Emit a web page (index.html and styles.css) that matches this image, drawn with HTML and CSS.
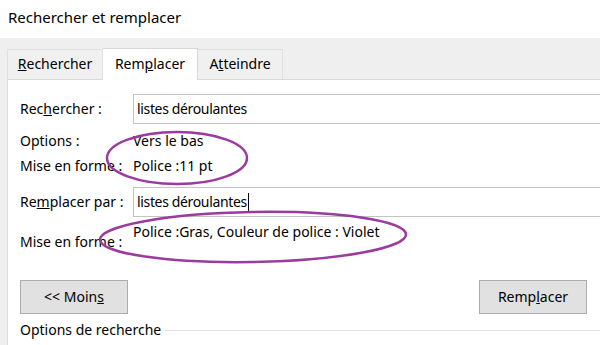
FILE: index.html
```html
<!DOCTYPE html>
<html lang="fr">
    <head>
        <meta charset="utf-8">
        <title>Rechercher et remplacer</title>
        <link rel="stylesheet" href="styles.css">
    </head>
    <body>
        <div class="page">
            <div class="title">Rechercher et remplacer</div>
            <div class="dialog">
                <div class="tabs">
                    <div class="tab t1"><u>R</u>echercher</div>
                    <div class="tab t2 active">Rem<u>p</u>lacer</div>
                    <div class="tab t3">A<u>t</u>teindre</div>
                </div>
                <div class="panel">
                    <div class="row r-find">
                        <div class="label">Rec<u>h</u>ercher :</div>
                        <div class="field">listes déroulantes</div>
                    </div>
                    <div class="row r-opt">
                        <div class="label">Options :</div>
                        <div class="value">Vers le bas</div>
                    </div>
                    <div class="row r-fmt">
                        <div class="label">Mise en forme :</div>
                        <div class="value">Police :11 pt</div>
                    </div>
                    <div class="row r-repl">
                        <div class="label">Re<u>m</u>placer par :</div>
                        <div class="field">listes déroulantes<span class="caret"></span></div>
                    </div>
                    <div class="row r-fmt2">
                        <div class="label">Mise en forme :</div>
                        <div class="value">Police :Gras, Couleur de police : Violet</div>
                    </div>
                    <div class="buttons">
                        <div class="btn">&lt;&lt; Moin<u>s</u></div>
                        <div class="btn">Remp<u>l</u>acer</div>
                    </div>
                    <div class="section">
                        <span>Options de recherche</span>
                        <span class="rule"></span>
                    </div>
                </div>
            </div>
            <svg class="marks" width="600" height="345" viewBox="0 0 600 345">
                <ellipse cx="177" cy="158" rx="70" ry="26" />
                <ellipse cx="253" cy="237" rx="153" ry="25" transform="rotate(-1 253 237)" />
            </svg>
        </div>
    </body>
</html>
```

FILE: styles.css
```css
html, body {
    margin: 0;
    padding: 0;
    background: #ffffff;
}
body {
    font-family: "Noto Sans", "Open Sans", sans-serif;
    font-size: 14px;
    color: #000000;
    overflow: hidden;
}
.page {
    position: relative;
    width: 600px;
    height: 345px;
    overflow: hidden;
}
.title {
    height: 38px;
    box-sizing: border-box;
    padding: 5px 0 0 8px;
    font-size: 15px;
    line-height: 24px;
}
.dialog {
    background: #efefef;
    padding: 11px 0 0 7px;
    height: 307px;
    box-sizing: border-box;
}
.tabs {
    display: flex;
    align-items: flex-end;
    height: 30px;
}
.tab {
    box-sizing: border-box;
    height: 30px;
    border: 1px solid #e0e0e0;
    border-bottom: none;
    line-height: 28px;
    text-align: center;
    background: #f0f0f0;
}
.tab.t1 {
    width: 96px;
}
.tab.t2 {
    width: 95px;
}
.tab.t3 {
    width: 85px;
    border-left: none;
}
.tab.active {
    height: 32px;
    margin-bottom: -1px;
    background: #ffffff;
    border-color: #d9d9d9;
    border-left: none;
    line-height: 30px;
    position: relative;
}
.panel {
    background: #ffffff;
    border-top: 1px solid #d9d9d9;
    border-left: 1px solid #dcdcdc;
    padding: 0 0 0 12px;
    height: 266px;
}
.row {
    display: flex;
    line-height: 20px;
}
.label {
    width: 113px;
    flex: none;
}
.field {
    flex: 1;
    height: 30px;
    box-sizing: border-box;
    border: 1px solid #c4c4c4;
    border-right: none;
    padding: 4px 0 0 3px;
    line-height: 20px;
    letter-spacing: -0.35px;
    margin-right: -10px;
}
.caret {
    display: inline-block;
    width: 1px;
    height: 18px;
    margin-left: 1px;
    background: #000000;
    vertical-align: -4px;
}
.r-find {
    margin-top: 14px;
    align-items: center;
}
.r-opt {
    margin-top: 7px;
}
.r-fmt {
    margin-top: 5px;
}
.r-repl {
    margin-top: 11px;
    align-items: center;
}
.r-fmt2 {
    margin-top: 5px;
}
.r-fmt2 .label {
    padding-top: 10px;
}
.buttons {
    display: flex;
    justify-content: space-between;
    margin-top: 28px;
    padding-right: 13px;
}
.btn {
    width: 108px;
    height: 34px;
    box-sizing: border-box;
    background: #e1e1e1;
    border: 1px solid #adadad;
    text-align: center;
    line-height: 32px;
}
.section {
    display: flex;
    align-items: center;
    margin-top: 6px;
    line-height: 20px;
}
.section .rule {
    flex: 1;
    height: 1px;
    background: #e3e3e3;
    margin-left: 4px;
    margin-top: 1px;
}
.marks {
    position: absolute;
    left: 0;
    top: 0;
}
.marks ellipse {
    fill: none;
    stroke: #9b3a9f;
    stroke-width: 2.5;
}
```
